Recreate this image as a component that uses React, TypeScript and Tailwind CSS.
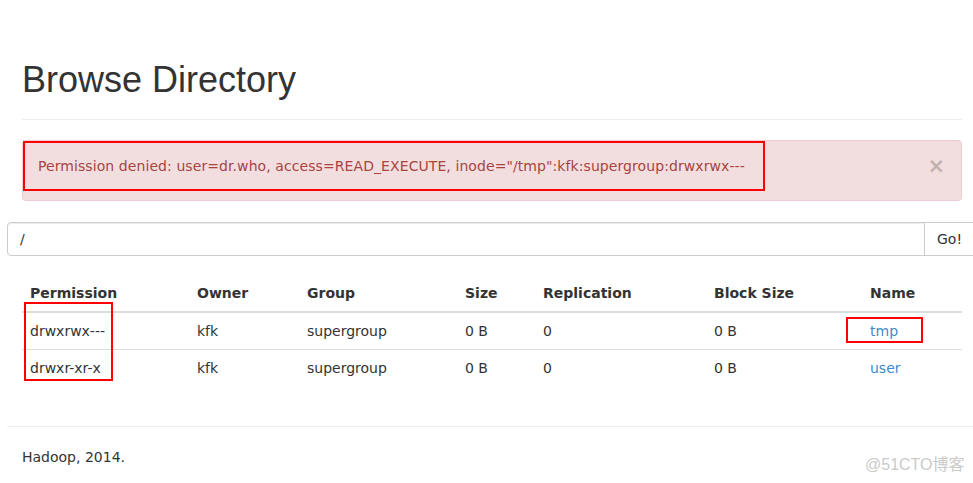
import React from 'react';

type Entry = {
  permission: string;
  owner: string;
  group: string;
  size: string;
  replication: string;
  blockSize: string;
  name: string;
};

const entries: Entry[] = [
  { permission: 'drwxrwx---', owner: 'kfk', group: 'supergroup', size: '0 B', replication: '0', blockSize: '0 B', name: 'tmp' },
  { permission: 'drwxr-xr-x', owner: 'kfk', group: 'supergroup', size: '0 B', replication: '0', blockSize: '0 B', name: 'user' },
];

const columns = [
  { label: 'Permission', width: 'w-[167px]' },
  { label: 'Owner', width: 'w-[110px]' },
  { label: 'Group', width: 'w-[158px]' },
  { label: 'Size', width: 'w-[78px]' },
  { label: 'Replication', width: 'w-[171px]' },
  { label: 'Block Size', width: 'w-[156px]' },
  { label: 'Name', width: 'w-[100px]' },
];

export default function App() {
  return (
    <div className="relative min-h-[483px] overflow-hidden bg-white font-['DejaVu_Sans',sans-serif] text-[14px] leading-[20px] text-[#333]">
      <div className="pl-[22px] pr-[11px] pt-[60px]">
        <div className="border-b border-[#eee] pb-[19px]">
          <h1 className="font-['Liberation_Sans',Arial,sans-serif] text-[36px] font-normal leading-[39.6px] text-[#333]">
            Browse Directory
          </h1>
        </div>

        {/* error alert */}
        <div className="mt-[20px] flex h-[61px] items-start rounded-[4px] border border-[#ebccd1] bg-[#f2dede] pl-[15px] pr-[16px] pt-[15px] text-[#a94442]">
          <span className="flex-1 tracking-[0.08px]">
            Permission denied: user=dr.who, access=READ_EXECUTE, inode="/tmp":kfk:supergroup:drwxrwx---
          </span>
          <span className="h-[20px] text-[21px] font-bold leading-[20px] text-black opacity-20">×</span>
        </div>
      </div>

      {/* path input */}
      <div className="ml-[7px] mt-[21px] flex h-[34px]">
        <div className="flex w-[918px] shrink-0 items-center rounded-l-[4px] border border-[#ccc] px-[12px] shadow-[inset_0_1px_1px_rgba(0,0,0,0.075)]">
          /
        </div>
        <div className="-ml-px flex w-[52px] shrink-0 items-center border border-[#ccc] bg-white px-[12px]">
          Go!
        </div>
      </div>

      <div className="pl-[22px] pr-[11px] pt-[19px]">
        <table className="w-[940px] table-fixed border-collapse">
          <thead>
            <tr>
              {columns.map((c) => (
                <th key={c.label} className={`${c.width} border-b-2 border-[#ddd] p-[8px] text-left align-bottom font-bold`}>
                  {c.label}
                </th>
              ))}
            </tr>
          </thead>
          <tbody>
            {entries.map((e, i) => (
              <tr key={e.name} className={i > 0 ? 'border-t border-[#ddd]' : ''}>
                <td className="p-[8px]">{e.permission}</td>
                <td className="p-[8px]">{e.owner}</td>
                <td className="p-[8px]">{e.group}</td>
                <td className="p-[8px]">{e.size}</td>
                <td className="p-[8px]">{e.replication}</td>
                <td className="p-[8px]">{e.blockSize}</td>
                <td className="p-[8px]">
                  <a href="#" className="text-[#428bca]">{e.name}</a>
                </td>
              </tr>
            ))}
          </tbody>
        </table>
      </div>

      {/* footer */}
      <div className="ml-[7px] mt-[40px] border-t border-[#eee] pl-[15px] pt-[20px]">
        <p>Hadoop, 2014.</p>
      </div>

      {/* watermark */}
      <div className="absolute left-[865px] top-[455px] font-['Liberation_Sans','Noto_Sans_CJK_SC',sans-serif] text-[16px] leading-[20px] text-[#cacaca]">
        @51CTO博客
      </div>

      {/* red annotation boxes */}
      <div className="pointer-events-none absolute left-[23px] top-[141px] h-[50px] w-[742px] border-2 border-[#ff0000]" />
      <div className="pointer-events-none absolute left-[24px] top-[302px] h-[79px] w-[89px] border-2 border-[#ff0000]" />
      <div className="pointer-events-none absolute left-[846px] top-[317px] h-[26px] w-[77px] border-2 border-[#ff0000]" />
    </div>
  );
}
